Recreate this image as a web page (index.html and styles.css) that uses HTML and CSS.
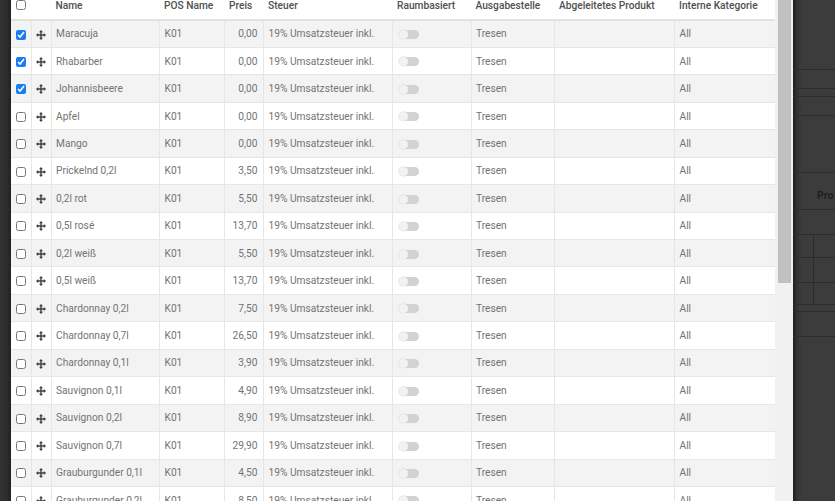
FILE: index.html
```html
<!DOCTYPE html>
<html lang="de">
<head>
<meta charset="utf-8">
<title>Produkte</title>
<link rel="stylesheet" href="styles.css">
</head>
<body>
<div class="page">
  <div class="side side-left">
    <div class="seg" style="height:92px"></div>
    <div class="seg" style="height:81px"></div>
    <div class="seg" style="height:37px"></div>
    <div class="seg" style="height:25px"></div>
    <div class="seg" style="height:23px"></div>
    <div class="seg" style="height:25px"></div>
  </div>
  <div class="panel">
    <div class="table-wrap">
      <table class="grid">
        <colgroup>
          <col class="c-check"><col class="c-drag"><col class="c-name"><col class="c-pos"><col class="c-price"><col class="c-tax"><col class="c-room"><col class="c-out"><col class="c-derived"><col class="c-cat">
        </colgroup>
        <thead>
          <tr>
            <th class="center"><input type="checkbox" class="cb"></th>
            <th></th>
            <th>Name</th>
            <th>POS Name</th>
            <th>Preis</th>
            <th>Steuer</th>
            <th>Raumbasiert</th>
            <th>Ausgabestelle</th>
            <th>Abgeleitetes Produkt</th>
            <th>Interne Kategorie</th>
          </tr>
        </thead>
        <tbody id="rows"></tbody>
      </table>
    </div>
    <div class="scrollbar"><div class="thumb"></div></div>
  </div>
  <div class="side side-right">
    <div class="seg" style="height:70px"></div>
    <div class="seg" style="height:19px"></div>
    <div class="seg" style="height:8px"></div>
    <div class="seg" style="height:19px"></div>
    <div class="seg" style="height:57px"></div>
    <div class="seg head-seg" style="height:37px"><span class="bg-label">Pro</span></div>
    <div class="seg" style="height:25px"></div>
    <div class="seg cells" style="height:23px"></div>
    <div class="seg cells" style="height:25px"></div>
    <div class="seg cells" style="height:22px"></div>
    <div class="seg" style="height:7px"></div>
    <div class="seg" style="height:25px"></div>
  </div>
</div>
<script src="app.js"></script>
</body>
</html>
```

FILE: app.js
```js
const data = [
  ["Maracuja", "0,00", true],
  ["Rhabarber", "0,00", true],
  ["Johannisbeere", "0,00", true],
  ["Apfel", "0,00", false],
  ["Mango", "0,00", false],
  ["Prickelnd 0,2l", "3,50", false],
  ["0,2l rot", "5,50", false],
  ["0,5l rosé", "13,70", false],
  ["0,2l weiß", "5,50", false],
  ["0,5l weiß", "13,70", false],
  ["Chardonnay 0,2l", "7,50", false],
  ["Chardonnay 0,7l", "26,50", false],
  ["Chardonnay 0,1l", "3,90", false],
  ["Sauvignon 0,1l", "4,90", false],
  ["Sauvignon 0,2l", "8,90", false],
  ["Sauvignon 0,7l", "29,90", false],
  ["Grauburgunder 0,1l", "4,50", false],
  ["Grauburgunder 0,2l", "8,50", false]
];
const drag = '<svg class="drag" viewBox="0 0 10 10" width="10" height="10"><path d="M5 1.5v7M1.5 5h7" stroke="#3f3f3f" stroke-width="1.4"/><path d="M5 0 3 2.2h4zM5 10 3 7.8h4zM0 5l2.2-2v4zM10 5 7.8 3v4z" fill="#3f3f3f"/></svg>';
const tbody = document.getElementById("rows");
tbody.innerHTML = data.map(([name, price, checked]) => `
<tr>
  <td class="center"><input type="checkbox" class="cb"${checked ? " checked" : ""}></td>
  <td class="center">${drag}</td>
  <td>${name}</td>
  <td>K01</td>
  <td class="num">${price}</td>
  <td>19% Umsatzsteuer inkl.</td>
  <td><span class="toggle"><span class="knob"></span></span></td>
  <td>Tresen</td>
  <td></td>
  <td>All</td>
</tr>`).join("");
```

FILE: styles.css
```css
* { box-sizing: border-box; }
html, body { margin: 0; padding: 0; }
body {
  width: 835px;
  height: 501px;
  overflow: hidden;
  background: #3b3b3b;
  font-family: Roboto, "Liberation Sans", sans-serif;
}
.page {
  display: flex;
  height: 501px;
}
.side {
  display: flex;
  flex-direction: column;
  background: #3c3c3c;
}
.side-left {
  width: 11px;
  background: linear-gradient(to right, #333 0%, #2b2b2b 70%, #222 100%);
}
.side-right {
  width: 42px;
  background: linear-gradient(to right, #1f1f1f 0px, #343434 4px, #3c3c3c 9px);
}
.seg {
  flex: none;
  border-bottom: 1px solid #2c2c2c;
  position: relative;
}
.head-seg {
  display: flex;
  align-items: flex-end;
  padding: 0 0 8px 24px;
}
.bg-label {
  font-size: 10.5px;
  font-weight: 700;
  color: #1f1f1f;
  line-height: 11px;
}
.cells {
  background: linear-gradient(to right, transparent 20px, #2c2c2c 20px, #2c2c2c 21px, transparent 21px);
}
.panel {
  width: 782px;
  height: 501px;
  display: flex;
  background: #fff;
  overflow: hidden;
}
.table-wrap {
  width: 764px;
  overflow: hidden;
}
.scrollbar {
  width: 18px;
  background: #f1f1f1;
  padding: 0 2px 0 3px;
}
.thumb {
  height: 283px;
  background: #c1c1c1;
}
.grid {
  table-layout: fixed;
  width: 764px;
  border-collapse: collapse;
  font-size: 10.2px;
  color: #737373;
}
.c-check { width: 20px; }
.c-drag { width: 20px; }
.c-name { width: 108.5px; }
.c-pos { width: 65px; }
.c-price { width: 39px; }
.c-tax { width: 129px; }
.c-room { width: 78.5px; }
.c-out { width: 83.5px; }
.c-derived { width: 120px; }
.c-cat { width: 100.5px; }
th {
  height: 19px;
  padding: 0 4px 8px 4.5px;
  text-align: left;
  vertical-align: top;
  font-weight: 500;
  color: #505050;
  line-height: 11px;
  border-bottom: 2px solid #e2e2e2;
  white-space: nowrap;
  overflow: hidden;
}
td {
  height: 27.44px;
  padding: 0 5px 0 4.5px;
  border: 1px solid #e6e6e6;
  line-height: 11px;
  white-space: nowrap;
  overflow: hidden;
}
td:first-child { border-left: none; }
td:last-child { border-right: none; }
tbody tr:nth-child(odd) td { background: #f3f3f3; }
td.num { text-align: right; padding-right: 5.5px; }
.center { text-align: center; padding: 0; }
th.center { padding-top: 0; }
.cb {
  width: 10px;
  height: 10px;
  margin: 0;
  vertical-align: middle;
  accent-color: #1a7cf5;
}
th .cb { vertical-align: top; }
.drag { display: inline-block; vertical-align: middle; }
.toggle {
  display: inline-block;
  position: relative;
  width: 20px;
  height: 9px;
  border-radius: 5px;
  background: #d2d2d2;
  margin-left: 1.5px;
  vertical-align: middle;
}
.knob {
  position: absolute;
  left: 0;
  top: 0;
  width: 9px;
  height: 9px;
  border-radius: 50%;
  background: #f2f2f2;
  box-shadow: 0 0 0 0.5px #d9d9d9;
}
```
